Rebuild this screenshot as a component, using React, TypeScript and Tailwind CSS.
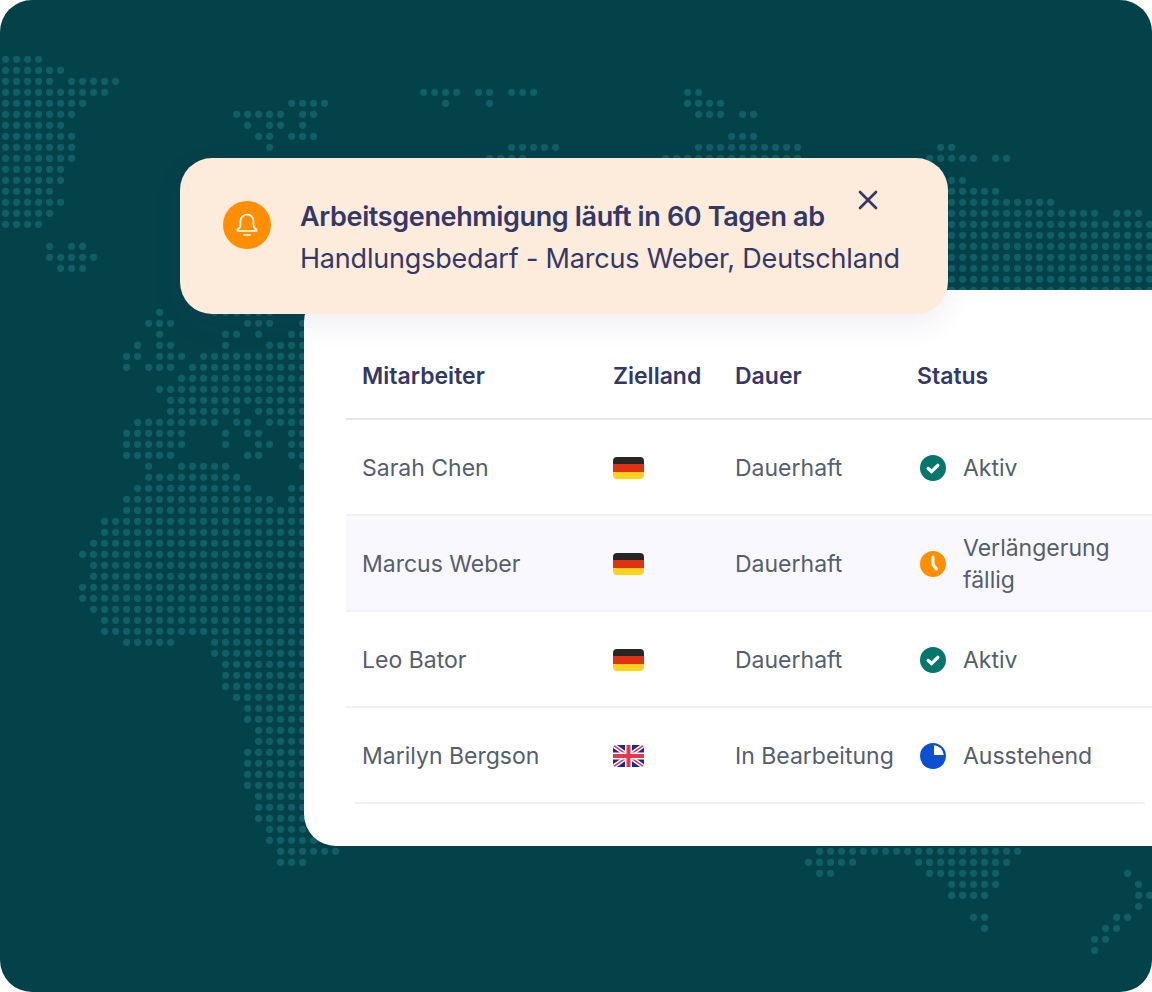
import { X } from "lucide-react";

// dot map rows: row index -> column ranges
const mapRows: Record<number, [number, number][]> = {
  0: [[0, 3]],
  1: [[0, 5]],
  2: [[0, 4], [6, 10]],
  3: [[0, 9], [38, 41], [43, 44], [46, 48], [62, 63]],
  4: [[0, 7], [26, 29], [40, 40], [44, 44], [62, 65]],
  5: [[0, 6], [21, 25], [27, 28], [63, 65], [67, 68]],
  6: [[0, 5], [22, 22], [24, 25], [27, 27]],
  7: [[0, 6], [23, 24], [26, 28], [66, 68]],
  8: [[0, 6], [24, 24], [46, 50], [63, 72], [85, 86]],
  9: [[0, 6], [44, 47], [60, 72], [84, 88], [90, 91]],
  10: [[0, 5]],
  11: [[0, 5], [86, 87]],
  12: [[0, 4], [86, 90]],
  13: [[0, 5], [86, 95]],
  14: [[0, 4], [86, 99], [101, 103]],
  15: [[0, 3], [86, 104]],
  16: [[86, 104]],
  17: [[4, 4], [6, 7], [86, 104]],
  18: [[4, 8], [86, 104]],
  19: [[5, 7], [86, 104]],
  20: [[86, 104]],
  21: [[86, 104]],
  23: [[14, 14], [19, 24]],
  24: [[13, 15], [22, 24], [27, 27]],
  25: [[14, 14], [20, 21], [23, 23], [26, 27]],
  26: [[12, 12], [14, 15], [20, 20], [24, 27]],
  27: [[11, 12], [14, 16], [18, 27]],
  28: [[11, 11], [13, 15], [17, 27]],
  29: [[16, 27]],
  30: [[14, 27]],
  31: [[15, 27]],
  32: [[15, 21], [23, 27]],
  33: [[12, 19], [21, 22], [24, 27]],
  34: [[11, 16], [20, 20], [22, 23], [26, 27]],
  35: [[11, 16], [20, 20], [23, 24], [26, 27]],
  36: [[11, 15], [22, 23], [26, 27]],
  37: [[13, 13], [16, 20], [27, 27]],
  38: [[13, 21]],
  39: [[12, 22], [26, 27]],
  40: [[11, 24], [26, 27]],
  41: [[11, 27]],
  42: [[9, 27]],
  43: [[9, 27]],
  44: [[8, 27]],
  45: [[7, 27]],
  46: [[8, 27]],
  47: [[8, 27]],
  48: [[7, 27]],
  49: [[7, 27]],
  50: [[8, 27]],
  51: [[9, 27]],
  52: [[9, 27]],
  53: [[11, 15], [19, 27]],
  54: [[19, 27]],
  55: [[20, 27]],
  56: [[20, 27]],
  57: [[20, 27]],
  58: [[21, 27]],
  59: [[22, 27]],
  60: [[22, 27]],
  61: [[23, 27]],
  62: [[23, 27]],
  63: [[22, 27]],
  64: [[22, 27]],
  65: [[22, 27]],
  66: [[22, 27]],
  67: [[23, 27]],
  68: [[23, 27]],
  69: [[23, 27]],
  70: [[24, 27]],
  71: [[24, 28]],
  72: [[25, 30], [74, 92]],
  73: [[25, 27], [73, 77], [83, 91]],
  74: [[74, 75], [84, 90], [102, 102]],
  75: [[86, 90], [103, 103]],
  76: [[86, 89], [103, 104]],
  77: [[103, 103]],
  78: [[88, 89], [101, 102]],
  79: [[89, 89], [100, 101]],
  80: [[99, 100]],
  81: [[99, 99]],
};

function DotMap() {
  const dots: { x: number; y: number }[] = [];
  for (const [row, ranges] of Object.entries(mapRows)) {
    for (const [from, to] of ranges) {
      for (let c = from; c <= to; c++) {
        dots.push({ x: 5.6 + c * 11, y: 59.3 + Number(row) * 11 });
      }
    }
  }
  return (
    <svg className="absolute inset-0" width="1152" height="992" viewBox="0 0 1152 992">
      {dots.map((d) => (
        <circle key={`${d.x}-${d.y}`} cx={d.x} cy={d.y} r="3.6" fill="#0F5F66" />
      ))}
    </svg>
  );
}

function BellIcon() {
  return (
    <svg width="22" height="24" viewBox="0 0 22 24" fill="none" stroke="#fff" strokeWidth="1.7" strokeLinecap="round" strokeLinejoin="round">
      <path d="M11 1.5A6.5 6.5 0 0 0 4.5 8v4c0 2-.8 3.4-3 4.6V18h19v-1.4c-2.2-1.2-3-2.6-3-4.6V8A6.5 6.5 0 0 0 11 1.5Z" />
      <path d="M8 22h6" />
    </svg>
  );
}

function FlagDE() {
  return (
    <div className="flex flex-col w-[31px] h-[22px] rounded-[4px] overflow-hidden">
      <div className="flex-1 bg-[#262626]" />
      <div className="flex-1 bg-[#E3300E]" />
      <div className="flex-1 bg-[#FFD21E]" />
    </div>
  );
}

function FlagUK() {
  return (
    <svg width="31" height="22" viewBox="0 0 31 22" className="rounded-[4px]">
      <rect width="31" height="22" fill="#1A2A8C" />
      <path d="M0 0L31 22M31 0L0 22" stroke="#fff" strokeWidth="4.4" />
      <path d="M0 0L31 22M31 0L0 22" stroke="#E8364F" strokeWidth="1.5" />
      <path d="M15.5 0V22M0 11H31" stroke="#fff" strokeWidth="7" />
      <path d="M15.5 0V22M0 11H31" stroke="#E8364F" strokeWidth="4" />
    </svg>
  );
}

function StatusIcon({ type }: { type: "ok" | "clock" | "pending" }) {
  if (type === "ok") {
    return (
      <svg width="26" height="26" viewBox="0 0 26 26">
        <circle cx="13" cy="13" r="13" fill="#05766C" />
        <path d="M8.2 13.6l3.3 3L17.8 10.4" fill="none" stroke="#fff" strokeWidth="3.4" strokeLinecap="round" strokeLinejoin="round" />
      </svg>
    );
  }
  if (type === "clock") {
    return (
      <svg width="26" height="26" viewBox="0 0 26 26">
        <circle cx="13" cy="13" r="13" fill="#FF8F00" />
        <path d="M13 6V13.5L16.5 18" fill="none" stroke="#fff" strokeWidth="3" strokeLinecap="round" strokeLinejoin="round" />
      </svg>
    );
  }
  return (
    <svg width="26" height="26" viewBox="0 0 26 26">
      <circle cx="13" cy="13" r="13" fill="#0B50D0" />
      <path d="M14 2.2A11 11 0 0 1 23.8 12H14Z" fill="#fff" />
    </svg>
  );
}

const people = [
  { name: "Sarah Chen", flag: "de", dauer: "Dauerhaft", icon: "ok", status: "Aktiv" },
  { name: "Marcus Weber", flag: "de", dauer: "Dauerhaft", icon: "clock", status: "Verlängerung fällig" },
  { name: "Leo Bator", flag: "de", dauer: "Dauerhaft", icon: "ok", status: "Aktiv" },
  { name: "Marilyn Bergson", flag: "uk", dauer: "In Bearbeitung", icon: "pending", status: "Ausstehend" },
] as const;

export default function App() {
  return (
    <div className="relative w-[1152px] h-[992px] overflow-hidden rounded-[32px] bg-[#04424A] font-[Inter,sans-serif]">
      <DotMap />

      <div className="relative pt-[290px] pl-[304px]">
        <section className="h-[556px] rounded-l-[32px] bg-white pt-[44px] pl-[42px] text-[23px] text-[#545E6E]">
          <div className="grid grid-cols-[251px_122px_182px_1fr] h-[86px] items-center pt-px pl-4 border-b-2 border-[#E5E7F0] font-semibold text-[#343866]">
            <div>Mitarbeiter</div>
            <div>Zielland</div>
            <div>Dauer</div>
            <div>Status</div>
          </div>
          {people.map((p, i) => (
            <div
              key={p.name}
              className={
                i === 3
                  ? "grid grid-cols-[251px_122px_182px_1fr] h-[94px] items-center pt-0.5 pl-4"
                  : i === 1
                    ? "grid grid-cols-[251px_122px_182px_1fr] h-[96px] items-center pt-0.5 pl-4 border-b-2 border-[#F0F0F6] bg-[#F9F8FE]"
                    : "grid grid-cols-[251px_122px_182px_1fr] h-[96px] items-center pt-0.5 pl-4 border-b-2 border-[#F0F0F6]"
              }
            >
              <div>{p.name}</div>
              <div>{p.flag === "de" ? <FlagDE /> : <FlagUK />}</div>
              <div>{p.dauer}</div>
              <div className="flex items-center gap-[17px] pl-[3px]">
                <StatusIcon type={p.icon} />
                <div className="w-[170px] leading-8">{p.status}</div>
              </div>
            </div>
          ))}
          <div className="ml-2 mr-[7px] h-0.5 rounded-full bg-[#F0F0F6]" />
        </section>
      </div>

      <div className="absolute left-[180px] top-[158px] flex h-[156px] w-[768px] items-center rounded-[32px] bg-[#FDEBDC] pl-[43px] shadow-[0_10px_30px_rgba(52,56,102,0.08)]">
        <div className="mb-[22px] flex size-12 shrink-0 items-center justify-center rounded-full bg-[#FF8F00]">
          <BellIcon />
        </div>
        <div className="ml-[29px] mt-1 text-[27px] leading-[42px] text-[#343866]">
          <div className="font-semibold tracking-[-0.36px]">Arbeitsgenehmigung läuft in 60 Tagen ab</div>
          <div className="tracking-[-0.2px]">Handlungsbedarf - Marcus Weber, Deutschland</div>
        </div>
        <X className="absolute right-[64px] top-[26px] size-8 text-[#343866]" strokeWidth={2} />
      </div>
    </div>
  );
}
